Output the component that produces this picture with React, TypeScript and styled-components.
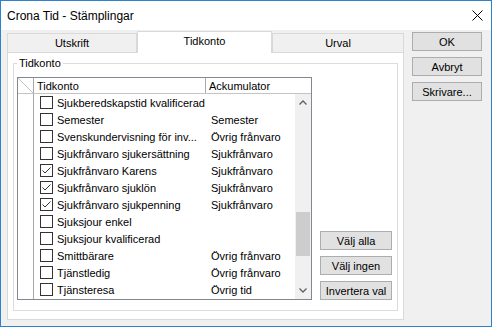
import React from "react";
import styled, { createGlobalStyle } from "styled-components";

const GlobalStyle = createGlobalStyle`
  html, body {
    margin: 0;
    padding: 0;
    background: #f0f0f0;
  }
  * {
    box-sizing: border-box;
  }
  body {
    font-family: "Liberation Sans", Arial, sans-serif;
    font-size: 11px;
    color: #000;
  }
`;

const Window = styled.div`
  width: 492px;
  height: 327px;
  border: 1px solid #2e82cc;
  background: #f0f0f0;
  display: flex;
  flex-direction: column;
`;

const TitleBar = styled.div`
  flex: none;
  height: 29px;
  background: #fff;
  display: flex;
  align-items: center;
  justify-content: space-between;
  padding: 0 8px 0 6px;
  font-size: 12px;
`;

const Body = styled.div`
  flex: 1;
  min-height: 0;
  display: flex;
  gap: 8px;
  padding: 1px 8px 6px 6px;
`;

const TabArea = styled.div`
  width: 397px;
  display: flex;
  flex-direction: column;
`;

const TabRow = styled.div`
  height: 21px;
  display: flex;
  align-items: flex-end;
  position: relative;
  z-index: 1;
`;

const Tab = styled.div<{ $active?: boolean; $w: number }>`
  width: ${(p) => p.$w}px;
  height: ${(p) => (p.$active ? 22 : 19)}px;
  margin-bottom: ${(p) => (p.$active ? -1 : 0)}px;
  padding-bottom: ${(p) => (p.$active ? 3 : 0)}px;
  border: 1px solid #d9d9d9;
  border-bottom: none;
  background: ${(p) => (p.$active ? "#fff" : "#f0f0f0")};
  display: flex;
  align-items: center;
  justify-content: center;
`;

const Panel = styled.div`
  flex: 1;
  display: flex;
  border: 1px solid #d9d9d9;
  background: #fff;
  padding: 3px 5px 8px 5px;
`;

const Group = styled.fieldset`
  flex: 1;
  min-width: 0;
  margin: 0;
  border: 1px solid #dcdcdc;
  padding: 6px 5px 10px 3px;
  display: flex;
  gap: 8px;
`;

const Legend = styled.legend`
  padding: 0 2px;
  line-height: 15px;
`;

const List = styled.div`
  width: 295px;
  display: flex;
  flex-direction: column;
  border: 1px solid #828790;
  background: #fff;
`;

const Header = styled.div`
  flex: none;
  height: 16px;
  display: flex;
  border-bottom: 1px solid #c4c4c4;
`;

const Corner = styled.div`
  width: 16px;
  border-right: 1px solid #a9a9a9;
  display: flex;
`;

const HeaderCell = styled.div<{ $w?: number }>`
  ${(p) => (p.$w ? `width: ${p.$w}px; border-right: 1px solid #a9a9a9;` : "flex: 1;")}
  display: flex;
  align-items: center;
  padding-left: 3px;
  white-space: nowrap;
  overflow: hidden;
`;

const ListBody = styled.div`
  flex: 1;
  min-height: 0;
  display: flex;
`;

const Gutter = styled.div`
  width: 16px;
  border-right: 1px solid #a9a9a9;
`;

const Rows = styled.div`
  flex: 1;
  min-width: 0;
  overflow: hidden;
`;

const Row = styled.div`
  height: 17px;
  display: flex;
  align-items: center;
  white-space: nowrap;
`;

const NameCell = styled.div`
  width: 172px;
  display: flex;
  align-items: center;
  gap: 4px;
  padding-left: 6px;
  overflow: hidden;
`;

const AccCell = styled.div`
  flex: 1;
  padding-left: 5px;
  overflow: hidden;
`;

const Box = styled.span`
  flex: none;
  width: 13px;
  height: 13px;
  border: 1px solid #333;
  background: #fff;
  display: flex;
  align-items: center;
  justify-content: center;
`;

const Scrollbar = styled.div`
  width: 16px;
  background: #f0f0f0;
  display: flex;
  flex-direction: column;
`;

const Arrow = styled.div`
  height: 17px;
  display: flex;
  align-items: center;
  justify-content: center;
`;

const Track = styled.div`
  flex: 1;
`;

const Thumb = styled.div<{ $top: number; $h: number }>`
  margin: ${(p) => p.$top}px 1px 0;
  height: ${(p) => p.$h}px;
  background: #cdcdcd;
`;

const SideButtons = styled.div`
  width: 72px;
  display: flex;
  flex-direction: column;
  justify-content: flex-end;
  gap: 6px;
`;

const RightButtons = styled.div`
  width: 70px;
  margin-top: 1px;
  display: flex;
  flex-direction: column;
  gap: 6px;
`;

const Button = styled.button`
  height: 19px;
  padding: 0;
  background: #e1e1e1;
  border: 1px solid #adadad;
  font: inherit;
  color: #000;
`;

type Item = { name: string; acc: string; checked: boolean };

const items: Item[] = [
  { name: "Sjukberedskapstid kvalificerad", acc: "", checked: false },
  { name: "Semester", acc: "Semester", checked: false },
  { name: "Svenskundervisning för inv...", acc: "Övrig frånvaro", checked: false },
  { name: "Sjukfrånvaro sjukersättning", acc: "Sjukfrånvaro", checked: false },
  { name: "Sjukfrånvaro Karens", acc: "Sjukfrånvaro", checked: true },
  { name: "Sjukfrånvaro sjuklön", acc: "Sjukfrånvaro", checked: true },
  { name: "Sjukfrånvaro sjukpenning", acc: "Sjukfrånvaro", checked: true },
  { name: "Sjuksjour enkel", acc: "", checked: false },
  { name: "Sjuksjour kvalificerad", acc: "", checked: false },
  { name: "Smittbärare", acc: "Övrig frånvaro", checked: false },
  { name: "Tjänstledig", acc: "Övrig frånvaro", checked: false },
  { name: "Tjänsteresa", acc: "Övrig tid", checked: false },
];

const Chevron = ({ down }: { down?: boolean }) => (
  <svg width="8" height="5" viewBox="0 0 8 5">
    <polyline
      points={down ? "0.5,0.5 4,4 7.5,0.5" : "0.5,4.5 4,1 7.5,4.5"}
      fill="none"
      stroke="#606060"
      strokeWidth="1.3"
    />
  </svg>
);

const App = () => (
  <>
    <GlobalStyle />
    <Window>
      <TitleBar>
        <span>Crona Tid - Stämplingar</span>
        <svg width="11" height="11" viewBox="0 0 11 11">
          <path d="M0.5 0.5 L10.5 10.5 M10.5 0.5 L0.5 10.5" stroke="#000" strokeWidth="1" />
        </svg>
      </TitleBar>
      <Body>
        <TabArea>
          <TabRow>
            <Tab $w={130}>Utskrift</Tab>
            <Tab $w={135} $active>
              Tidkonto
            </Tab>
            <Tab $w={132}>Urval</Tab>
          </TabRow>
          <Panel>
            <Group>
              <Legend>Tidkonto</Legend>
              <List>
                <Header>
                  <Corner>
                    <svg width="15" height="15" viewBox="0 0 15 15">
                      <line x1="0" y1="0" x2="15" y2="15" stroke="#c8c8c8" strokeWidth="1" />
                    </svg>
                  </Corner>
                  <HeaderCell $w={172}>Tidkonto</HeaderCell>
                  <HeaderCell>Ackumulator</HeaderCell>
                </Header>
                <ListBody>
                  <Gutter />
                  <Rows>
                    {items.map((it) => (
                      <Row key={it.name}>
                        <NameCell>
                          <Box>
                            {it.checked && (
                              <svg width="11" height="11" viewBox="0 0 11 11">
                                <polyline
                                  points="1.5,5.5 4,8 9.5,2.5"
                                  fill="none"
                                  stroke="#333"
                                  strokeWidth="1"
                                />
                              </svg>
                            )}
                          </Box>
                          <span>{it.name}</span>
                        </NameCell>
                        <AccCell>{it.acc}</AccCell>
                      </Row>
                    ))}
                  </Rows>
                  <Scrollbar>
                    <Arrow>
                      <Chevron />
                    </Arrow>
                    <Track>
                      <Thumb $top={101} $h={44} />
                    </Track>
                    <Arrow>
                      <Chevron down />
                    </Arrow>
                  </Scrollbar>
                </ListBody>
              </List>
              <SideButtons>
                <Button>Välj alla</Button>
                <Button>Välj ingen</Button>
                <Button>Invertera val</Button>
              </SideButtons>
            </Group>
          </Panel>
        </TabArea>
        <RightButtons>
          <Button>OK</Button>
          <Button>Avbryt</Button>
          <Button>Skrivare...</Button>
        </RightButtons>
      </Body>
    </Window>
  </>
);

export default App;
